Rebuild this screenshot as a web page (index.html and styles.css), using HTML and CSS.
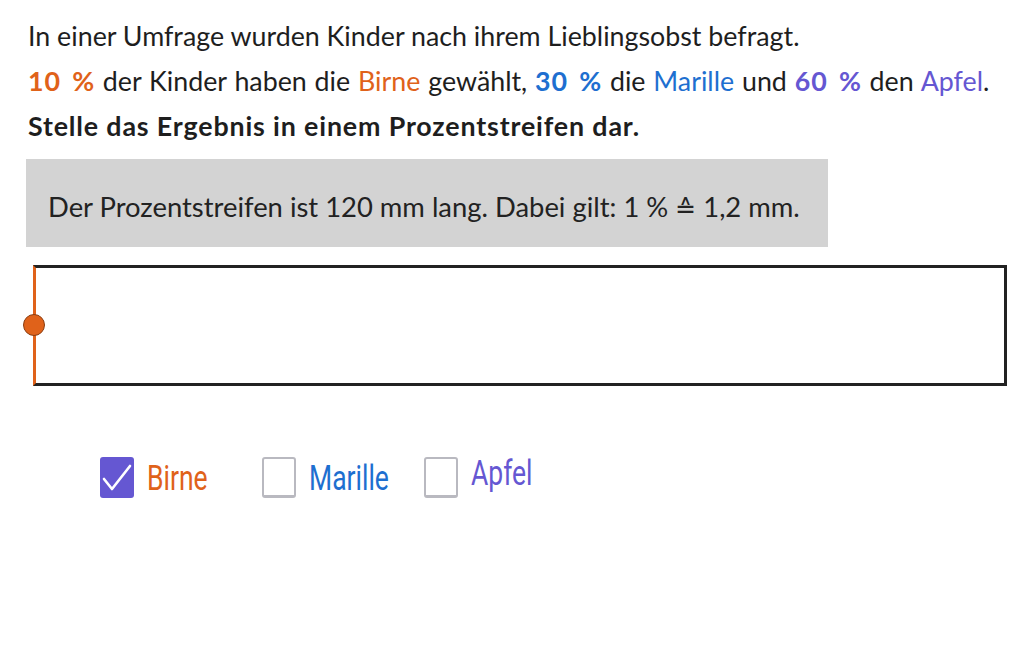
FILE: index.html
```html
<!DOCTYPE html>
<html lang="de">
<head>
<meta charset="utf-8">
<link rel="stylesheet" href="styles.css">
</head>
<body>
<div class="page">
  <p class="line">In einer Umfrage wurden Kinder nach ihrem Lieblingsobst befragt.</p>
  <p class="line mixed"><b class="c-orange">10 %</b> der Kinder haben die <span class="c-orange">Birne</span> gewählt, <b class="c-blue">30 %</b> die <span class="c-blue">Marille</span> und <b class="c-purple">60 %</b> den <span class="c-purple">Apfel</span>.</p>
  <p class="line task">Stelle das Ergebnis in einem Prozentstreifen dar.</p>
  <div class="hint">Der Prozentstreifen ist 120 mm lang. Dabei gilt: 1 % <span class="corr">≙</span> 1,2 mm.</div>
  <div class="strip">
    <span class="dot"></span>
  </div>
  <div class="choices">
    <label class="choice">
      <span class="box checked"><svg viewBox="0 0 34 41" width="34" height="41"><path d="M4 22 L12 32 L30 9" fill="none" stroke="#fff" stroke-width="2.6" stroke-linecap="round" stroke-linejoin="round"/></svg></span>
      <span class="lab c-orange">Birne</span>
    </label>
    <label class="choice">
      <span class="box"></span>
      <span class="lab c-blue">Marille</span>
    </label>
    <label class="choice up">
      <span class="box"></span>
      <span class="lab c-purple">Apfel</span>
    </label>
  </div>
</div>
</body>
</html>
```
FILE: styles.css
```css
html, body {
  margin: 0;
  padding: 0;
  background: #fff;
}
.page {
  padding: 14px 0 0 28px;
  font-family: Lato, "DejaVu Sans", sans-serif;
  color: #1e1e1e;
}
.line {
  margin: 0;
  font-size: 26.8px;
  line-height: 45px;
  white-space: nowrap;
}
.mixed {
  word-spacing: 1px;
}
.line b, .task {
  font-weight: 700;
  letter-spacing: 0.85px;
}
.line b {
  word-spacing: 4px;
}
.c-orange { color: #e0621a; }
.c-blue { color: #1e6fd0; }
.c-purple { color: #6557d2; }
.hint {
  box-sizing: border-box;
  width: 802px;
  height: 88px;
  margin: 10px 0 0 -2px;
  padding-left: 22px;
  background: #d3d3d3;
  font-size: 27.4px;
  line-height: 96px;
  color: #222;
  white-space: nowrap;
}
.corr {
  font-family: "DejaVu Sans", sans-serif;
  font-size: 25px;
}
.strip {
  position: relative;
  box-sizing: border-box;
  width: 974px;
  height: 121px;
  margin: 18px 0 0 5px;
  border: 3px solid #222;
  border-left: 3px solid #e0621a;
  background: #fff;
}
.dot {
  position: absolute;
  left: -13px;
  top: 46px;
  width: 20px;
  height: 20px;
  border-radius: 50%;
  background: #e0621a;
  border: 1px solid #8a3c10;
}
.choices {
  display: flex;
  align-items: flex-start;
  margin: 71px 0 0 72px;
  font-family: Roboto, sans-serif;
}
.choice {
  display: flex;
  align-items: center;
  width: 162px;
}
.box {
  box-sizing: border-box;
  flex: none;
  width: 34px;
  height: 41px;
  border: 2px solid #b9b9c0;
  border-bottom-width: 3px;
  border-radius: 3px;
  background: #fff;
  display: flex;
}
.box.checked {
  background: #6557d2;
  border: none;
}
.lab {
  margin-left: 13px;
  font-size: 26.5px;
  display: inline-block;
  transform: scaleY(1.3);
}
.up .lab {
  margin-top: -10px;
}
```
